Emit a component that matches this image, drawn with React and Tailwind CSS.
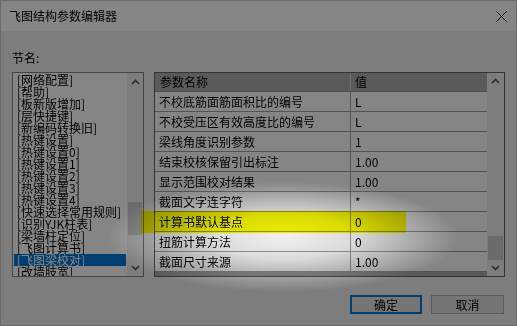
import React from 'react';

const sections = [
  '[网络配置]',
  '[帮助]',
  '[板新版增加]',
  '[层快捷键]',
  '[新编码转换旧]',
  '[热键设置]',
  '[热键设置0]',
  '[热键设置1]',
  '[热键设置2]',
  '[热键设置3]',
  '[热键设置4]',
  '[快速选择常用规则]',
  '[识别YJK柱表]',
  '[梁墙柱定位]',
  '[飞图计算书]',
  '[飞图梁校对]',
  '[改墙肢宽]',
];

const params = [
  ['不校底筋面筋面积比的编号', 'L'],
  ['不校受压区有效高度比的编号', 'L'],
  ['梁线角度识别参数', '1'],
  ['结束校核保留引出标注', '1.00'],
  ['显示范围校对结果', '1.00'],
  ['截面文字连字符', '*'],
  ['计算书默认基点', '0'],
  ['扭筋计算方法', '0'],
  ['截面尺寸来源', '1.00'],
];

const Chevron = ({ down }) => (
  <svg width="9" height="6" viewBox="0 0 9 6" className={down ? 'rotate-180' : ''}>
    <path d="M1 5 L4.5 1.5 L8 5" fill="none" stroke="#555" strokeWidth="1.6" />
  </svg>
);

const ScrollBar = ({ thumbTop, thumbHeight, width }) => (
  <div className={`flex flex-col bg-[#f0f0f0] ${width}`}>
    <div className="h-[17px] flex items-center justify-center">
      <Chevron />
    </div>
    <div className="flex-1">
      <div className="bg-[#cdcdcd] mx-[1px]" style={{ marginTop: thumbTop, height: thumbHeight }} />
    </div>
    <div className="h-[17px] flex items-center justify-center">
      <Chevron down />
    </div>
  </div>
);

export default function App() {
  return (
    <div className="relative w-[517px] h-[326px] overflow-hidden border border-[#6a6a6a] bg-[#f0f0f0] text-[12px] text-black font-['Noto_Sans_CJK_SC',sans-serif]">
      {/* title bar */}
      <div className="h-[30px] bg-white flex items-center justify-between pl-[8px] pr-[9px]">
        <span className="leading-[14px]">飞图结构参数编辑器</span>
        <svg width="11" height="11" viewBox="0 0 11 11">
          <path d="M0.5 0.5 L10.5 10.5 M10.5 0.5 L0.5 10.5" stroke="#000" strokeWidth="1" />
        </svg>
      </div>

      <div className="pl-[11px] pr-[11px] pt-[20px]">
        <div className="h-[14px] leading-[14px]">节名:</div>

        <div className="mt-[7px] flex gap-[10px]">
          {/* section list */}
          <div className="w-[132px] h-[205px] border border-[#828282] bg-white flex">
            <div className="flex-1 pt-[1px] overflow-hidden">
              {sections.map((s, i) => (
                <div
                  key={s}
                  className={`h-[12px] leading-[12px] pl-[3px] mx-[1px] whitespace-nowrap ${
                    i === 15 ? 'bg-[#0078d7] text-white' : ''
                  }`}
                >
                  {s}
                </div>
              ))}
            </div>
            <ScrollBar thumbTop={112} thumbHeight={33} width="w-[16px]" />
          </div>

          {/* parameter table */}
          <div className="w-[351px] h-[205px] border border-[#646464] bg-white flex">
            <div className="flex-1 flex flex-col">
              <div className="h-[19px] flex bg-[#adadad] border-b border-[#9a9a9a]">
                <div className="w-[196px] pl-[5px] leading-[18px] border-r border-[#d6d6d6]">参数名称</div>
                <div className="flex-1 pl-[4px] leading-[18px]">值</div>
              </div>
              {params.map(([name, value]) => (
                <div key={name} className="h-[20px] flex border-b border-[#a0a0a0]">
                  <div className="w-[196px] pl-[4px] leading-[19px] border-r border-[#a0a0a0] whitespace-nowrap">
                    {name}
                  </div>
                  <div className="flex-1 pl-[4px] leading-[19px]">{value}</div>
                </div>
              ))}
              <div className="flex-1 bg-[#a8a8a8]" />
            </div>
            <ScrollBar thumbTop={146} thumbHeight={24} width="w-[17px]" />
          </div>
        </div>

        {/* buttons */}
        <div className="mt-[18px] flex justify-end gap-[9px] pr-[1px]">
          <button className="w-[72px] h-[19px] border-2 border-[#0078d7] bg-[#e1e1e1] leading-[14px]">确定</button>
          <button className="w-[73px] h-[19px] border border-[#adadad] bg-[#e1e1e1] leading-[16px]">取消</button>
        </div>
      </div>

      {/* highlighter mark */}
      <div className="absolute left-[140px] top-[210px] w-[265px] h-[22px] bg-[#ffff00] mix-blend-multiply pointer-events-none" />

      {/* spotlight dimming */}
      <div className="absolute inset-0 pointer-events-none bg-[radial-gradient(ellipse_175px_55px_at_282px_236px,rgba(0,0,0,0.06)_0%,rgba(0,0,0,0.14)_40%,rgba(0,0,0,0.48)_100%)]" />
    </div>
  );
}
